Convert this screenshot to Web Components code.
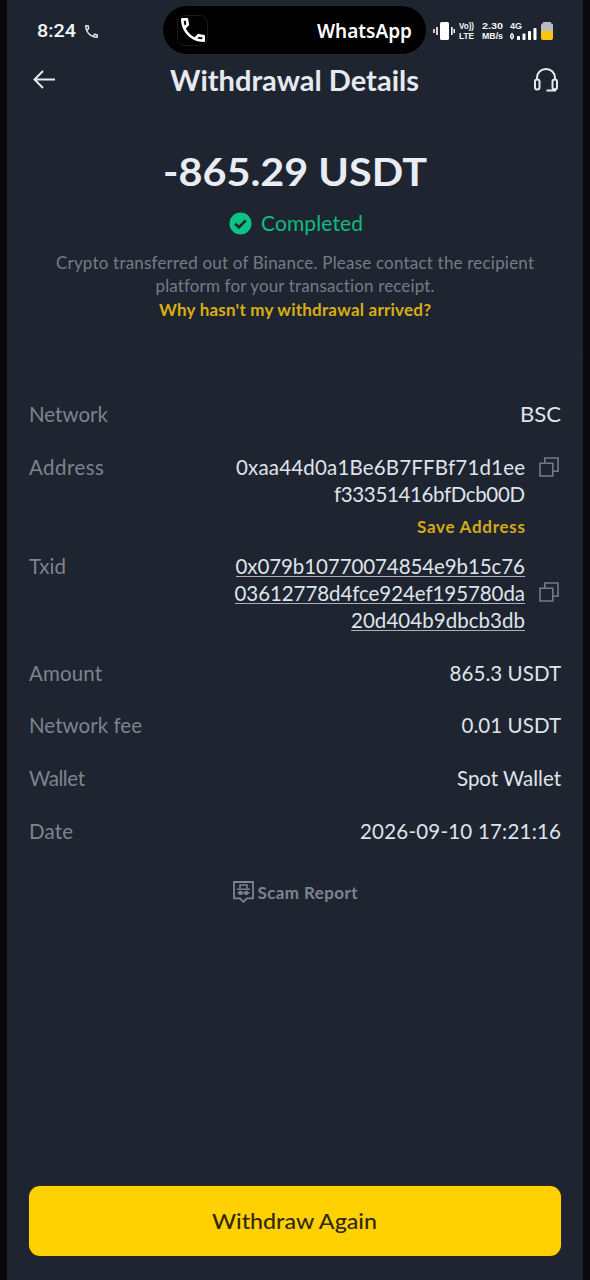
<!DOCTYPE html>
<html lang="en">
<head>
<meta charset="utf-8">
<title>Withdrawal Details</title>
<style>
html,body{margin:0;height:1280px;background:#07090b;overflow:hidden}
body{font-family:Lato,"Liberation Sans",sans-serif}
</style>
</head>
<body>
<withdrawal-screen></withdrawal-screen>
<script>
const define = (name, html, setup) => {
  const t = document.createElement('template');
  t.innerHTML = html;
  customElements.define(name, class extends HTMLElement {
    connectedCallback() {
      if (this.shadowRoot) return;
      this.attachShadow({mode: 'open'}).append(t.content.cloneNode(true));
      if (setup) setup(this);
    }
  });
};

/* One line of text set to a given advance width (w): tracked, or widened when "stretch" is set. */
define('fit-text', `<style>:host{display:inline-block;white-space:nowrap}span{display:inline-block;transform-origin:0 50%}</style><span><slot></slot></span>`, el => {
  const s = el.shadowRoot.querySelector('span');
  const w = parseFloat(el.getAttribute('w'));
  const fit = () => {
    s.style.letterSpacing = '0';
    s.style.transform = 'none';
    s.style.marginRight = '0';
    const n = s.getBoundingClientRect().width;
    if (el.hasAttribute('stretch')) {
      s.style.transform = 'scaleX(' + w / n + ')';
      s.style.marginRight = (w - n) + 'px';
    } else {
      const ls = (w - n) / (el.textContent.length - 1);
      s.style.letterSpacing = ls + 'px';
      s.style.marginRight = -ls + 'px';
    }
  };
  requestAnimationFrame(fit);
  fit();
});

define('call-icon', `<style>:host{display:block}svg{display:block;width:100%;height:100%}</style>
<svg viewBox="3 3 18 18" fill="currentColor"><path d="M6.54 5c.06.89.21 1.76.45 2.59l-1.2 1.2c-.41-1.2-.67-2.47-.76-3.79h1.51m9.86 12.02c.85.24 1.72.39 2.6.45v1.49c-1.32-.09-2.59-.35-3.8-.75l1.2-1.19M7.5 3H4c-.55 0-1 .45-1 1 0 9.39 7.61 17 17 17 .55 0 1-.45 1-1v-3.49c0-.55-.45-1-1-1-1.24 0-2.45-.2-3.57-.57-.1-.04-.21-.05-.31-.05-.26 0-.51.1-.71.29l-2.2 2.2c-2.83-1.45-5.15-3.76-6.59-6.59l2.2-2.2c.28-.28.36-.67.25-1.02C8.7 6.45 8.5 5.25 8.5 4c0-.55-.45-1-1-1z"/></svg>`);

define('status-bar', `<style>
:host{display:flex;height:60px;box-sizing:border-box;padding:5px 29px 0 30px;color:#f4f5f7}
.time{font:500 19px/51px Roboto,sans-serif;width:48px}
.small{width:13px;height:13px;margin:20px 64px 0 0;color:#dfe3ea}
.pill{box-sizing:border-box;width:265px;height:50px;border:1px solid #25282d;border-radius:25px;background:#000;display:flex;justify-content:space-between;padding:9px 14px 0}
.tile{box-sizing:border-box;width:31px;height:31px;border:1px solid #1b1b1b;border-radius:8px;padding:2px 2px 2px 3px;color:#fff}
.tile call-icon{width:24px;height:24px}
.app{font:600 19px/32px "Noto Sans",sans-serif;color:#fff}
.vib{margin:16px 4px 0 6px;width:22px;height:20px}
.col{font:700 9px/10px "Liberation Sans",sans-serif;width:23px;padding-top:16px;height:20px}
.col fit-text{display:block;height:10px}
.speed{width:28px}
.sig{width:31px;display:block}
.sig svg{display:block}
.bat{margin-top:17px}
svg{display:block;flex:none}
</style>
<div class="time"><fit-text w="39" stretch>8:24</fit-text></div>
<call-icon class="small"></call-icon>
<div class="pill"><div class="tile"><call-icon></call-icon></div><div class="app"><fit-text w="95">WhatsApp</fit-text></div></div>
<svg class="vib" viewBox="0 0 22 20" fill="#fff"><rect x="7" y="1" width="9" height="18" rx="1.5"/><path d="M3.2 6h1.6v8H3.2zM.2 8h1.5v4H.2zM18 6h1.6v8H18zM20.5 8H22v4h-1.5z"/></svg>
<div class="col"><fit-text w="15" stretch>Vo))</fit-text><fit-text w="15" stretch>LTE</fit-text></div>
<div class="col speed"><fit-text w="21" stretch>2.30</fit-text><fit-text w="21" stretch>MB/s</fit-text></div>
<div class="col sig"><fit-text w="12" stretch>4G</fit-text>
<svg width="28" height="13" viewBox="0 0 28 13" style="margin-top:-4px" fill="#fff"><path d="M0 8.2 2 5.5 4 8.2v2L2 13 0 10.2z"/><path d="M2 8v2.5" stroke="#1f2530"/><rect x="7" y="9" width="3" height="4" rx=".8"/><rect x="12.5" y="6.5" width="3" height="6.5" rx=".8"/><rect x="18" y="4" width="3" height="9" rx=".8"/><rect x="23.5" y="1" width="3" height="12" rx=".8"/></svg></div>
<svg class="bat" width="12" height="18" viewBox="0 0 12 18"><path d="M2 0h8v1.5h1Q12 2 12 3v6.5H0V3Q0 2 1 1.5h1z" fill="#b9bbc3"/><path d="M0 9h12v7q0 2-2 2H2q-2 0-2-2z" fill="#fbc613"/></svg>`);

define('nav-header', `<style>
:host{display:flex;height:40px;align-items:center;justify-content:space-between;padding:0 24px 0 26px;color:#e6e9f0}
h1{margin:0;font-size:28px;line-height:40px;font-weight:700}
svg{display:block;fill:none;stroke:currentColor;stroke-width:2}
</style>
<svg width="23" height="20" viewBox="0 0 23 20"><path d="M22 9.5H1.5M10 1 1.5 9.5 10 18"/></svg>
<h1><fit-text w="249" stretch>Withdrawal Details</fit-text></h1>
<svg width="26" height="24" viewBox="0 0 26 24"><path d="M4 12V9.8a9 8.8 0 0 1 18 0V12"/><rect x="2" y="11.5" width="4.5" height="10" rx="2.2"/><rect x="19.5" y="11.5" width="4.5" height="10" rx="2.2"/><path d="M22 20.5v2h-8.5"/></svg>`);

define('transfer-summary', `<style>
:host{display:flex;flex-direction:column;align-items:center;height:257px;border-bottom:1px solid #232a36}
.amount{margin-top:48.5px;font-size:37.5px;line-height:46px;font-weight:700;color:#e9ecf4}
.state{display:flex;gap:9px;align-items:center;height:26px;margin:15.5px 0 0 2px;font-size:21px;line-height:26px;color:#0fbb82}
.state svg{display:block}
.note{margin-top:16px;font-size:17px;line-height:22.5px;color:#757b88;text-align:center}
.note fit-text{display:table;margin:auto}
.help{margin-top:.5px;font-size:17px;line-height:24px;font-weight:700;color:#d9ad14}
</style>
<div class="amount"><fit-text w="264" stretch>-865.29 USDT</fit-text></div>
<div class="state"><svg width="23" height="23" viewBox="0 0 23 23"><circle cx="11.5" cy="11.5" r="11" fill="#0dc286"/><path d="m6.2 11.7 3.7 3.6 6.8-6.9" fill="none" stroke="#1f2530" stroke-width="2.6"/></svg><fit-text w="102">Completed</fit-text></div>
<div class="note"><fit-text w="478">Crypto transferred out of Binance. Please contact the recipient</fit-text><fit-text w="279">platform for your transaction receipt.</fit-text></div>
<div class="help"><fit-text w="272">Why hasn't my withdrawal arrived?</fit-text></div>`);

define('copy-icon', `<style>:host{display:block;width:20px;height:20px}svg{display:block}</style>
<svg width="20" height="20" viewBox="0 0 20 20" fill="none" stroke="#747a87" stroke-width="1.6"><path d="M1 6.3h12.8V19H1zM5.8 6V1H19v13.3h-5"/></svg>`);

define('detail-row', `<style>
:host{display:flex;justify-content:space-between;font-size:20.5px;line-height:27px;margin-bottom:25.8px;color:#7d8390}
.value{display:flex;gap:14px;color:#dfe3eb}
.lines{display:flex;flex-direction:column;align-items:flex-end}
</style>
<slot name="label"></slot>
<div class="value"><div class="lines"><slot></slot></div><slot name="icon"></slot></div>`);

define('scam-link', `<style>
:host{display:flex;justify-content:center;gap:4px;height:24px;font-size:17px;line-height:24px;font-weight:700;color:#7d8390}
svg{display:block}
</style>
<svg width="21" height="22" viewBox="0 0 21 22" fill="none" stroke="currentColor" stroke-width="1.8"><path d="M1 1h19v16.3h-6L10.5 20.8 7 17.3H1z"/><path d="M7 7.3V4h7v3.3M4 8.2h13" stroke-width="1.5"/><circle cx="7.6" cy="11.9" r="1.3"/><circle cx="13.4" cy="11.9" r="1.3"/><path d="M4.5 11.9h12" stroke-width="1.2"/></svg>
<fit-text w="100">Scam Report</fit-text>`);

define('primary-button', `<style>
:host{display:block}
button{display:block;width:100%;height:70px;padding:0;border:0;border-radius:11px;background:#ffd102;box-shadow:0 0 0 1px #2c2a17;color:#32290d;font:500 22px/70px Lato,sans-serif}
</style><button><slot></slot></button>`);

define('withdrawal-screen', `<style>
:host{display:flex;flex-direction:column;height:1280px;width:576px;margin-left:7px;background:#1f2530}
.list{padding:42.8px 22px 0}
.save{display:block;height:24px;line-height:24px;margin:7.5px 0 -12px;font-size:17px;font-weight:700;color:#d5aa16}
.tx{background:linear-gradient(#a9aeb8,#a9aeb8) 0 23px/100% 1px no-repeat}
.mid{align-self:center}
scam-link{margin-top:10.5px}
primary-button{margin:auto 22.5px 24px 22px}
</style>
<status-bar></status-bar>
<nav-header></nav-header>
<transfer-summary></transfer-summary>
<div class="list">
<detail-row><fit-text slot="label" w="79">Network</fit-text><fit-text w="41" stretch>BSC</fit-text></detail-row>
<detail-row><fit-text slot="label" w="75">Address</fit-text><fit-text w="289">0xaa44d0a1Be6B7FFBf71d1ee</fit-text><fit-text w="191">f33351416bfDcb00D</fit-text><fit-text class="save" w="108">Save Address</fit-text><copy-icon slot="icon" style="margin:3px 2px 0 0"></copy-icon></detail-row>
<detail-row><fit-text slot="label" w="37">Txid</fit-text><fit-text class="tx" w="289.5">0x079b10770074854e9b15c76</fit-text><fit-text class="tx" w="290.5">03612778d4fce924ef195780da</fit-text><fit-text class="tx" w="174">20d404b9dbcb3db</fit-text><copy-icon slot="icon" class="mid" style="margin:0 2px 2px 0"></copy-icon></detail-row>
<detail-row><fit-text slot="label" w="73">Amount</fit-text><fit-text w="111.5">865.3 USDT</fit-text></detail-row>
<detail-row><fit-text slot="label" w="113">Network fee</fit-text><fit-text w="99.5">0.01 USDT</fit-text></detail-row>
<detail-row><fit-text slot="label" w="56">Wallet</fit-text><fit-text w="104">Spot Wallet</fit-text></detail-row>
<detail-row><fit-text slot="label" w="44">Date</fit-text><fit-text w="201">2026-09-10 17:21:16</fit-text></detail-row>
</div>
<scam-link></scam-link>
<primary-button><fit-text w="165" stretch>Withdraw Again</fit-text></primary-button>`);
</script>
</body>
</html>
